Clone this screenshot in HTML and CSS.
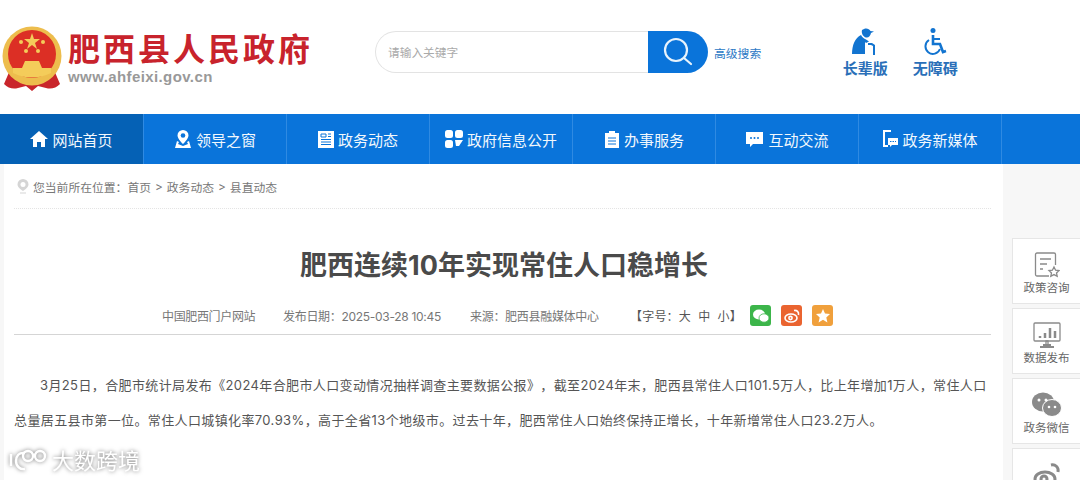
FILE: index.html
```html
<!DOCTYPE html>
<html lang="zh-CN">
<head>
    <meta charset="UTF-8">
    <title>肥西连续10年实现常住人口稳增长</title>
    <link rel="stylesheet" href="styles.css">
</head>
<body>
    <header class="top">
        <div class="logo">
            <svg class="emblem" width="60" height="66" viewBox="0 0 60 66">
                <path d="M8 44 L2 58 Q8 64 16 62 L24 60 L30 65 L36 60 L44 62 Q52 64 58 58 L52 44 Z" fill="#c9252b"/>
                <path d="M15 52 Q22 60 30 54 Q38 60 45 52" fill="none" stroke="#e9b544" stroke-width="2.500"/>
                <circle cx="30" cy="30" r="29.500" fill="#edbd4d"/>
                <circle cx="30" cy="28" r="24" fill="#dc2f25"/>
                <path d="M30 7l2 6h6l-5 4 2 6-5-4-5 4 2-6-5-4h6z" fill="#f4cc5a"/>
                <circle cx="19" cy="16" r="2" fill="#f4cc5a"/>
                <circle cx="41" cy="16" r="2" fill="#f4cc5a"/>
                <circle cx="24" cy="25" r="2" fill="#f4cc5a"/>
                <circle cx="36" cy="25" r="2" fill="#f4cc5a"/>
                <path d="M11 47 L11 42 L20 42 L23 35 L37 35 L40 42 L49 42 L49 47 Q30 56 11 47 Z" fill="#f4cc5a"/>
            </svg>
            <div class="logo-text">
                <div class="site-name">肥西县人民政府</div>
                <div class="site-url">www.ahfeixi.gov.cn</div>
            </div>
        </div>
        <div class="search">
            <div class="search-input">请输入关键字</div>
            <div class="search-btn">
                <svg width="30" height="30" viewBox="0 0 30 30" fill="none" stroke="#e8f3fc" stroke-width="2.200" stroke-linecap="round">
                    <circle cx="13" cy="13" r="11"/>
                    <path d="M21 21l7 6"/>
                </svg>
            </div>
        </div>
        <a class="adv-search">高级搜索</a>
        <div class="access">
            <div class="access-item">
                <svg width="28" height="28" viewBox="0 0 28 28" fill="#1274d0">
                    <path d="M11 3c3-2.500 7-2 8.500 1l3.500.5-3 1.500c-.5 3-2.500 5-5 4.500-2.500-.5-5-4-4-7.500z"/>
                    <path d="M10 8c1 2 3 4 5 4.500l3 2-3 1.500-1-1v12H1c0-9 3-16 9-19z"/>
                    <path d="M17 16h4l3 2v10h-2V19l-2-1h-3z"/>
                </svg>
                <span>长辈版</span>
            </div>
            <div class="access-item">
                <svg width="28" height="28" viewBox="0 0 28 28" fill="none" stroke="#1274d0" stroke-width="2">
                    <circle cx="12" cy="3.500" r="2.500" fill="#1274d0" stroke="none"/>
                    <path d="M12 8v9h7l3 8 3-1" stroke-width="2.600"/>
                    <path d="M12 12h7"/>
                    <path d="M8 13a7.500 7.500 0 1 0 11 9"/>
                </svg>
                <span>无障碍</span>
            </div>
        </div>
    </header>

    <nav class="nav">
        <a class="nav-item active">
            <svg width="18" height="18" viewBox="0 0 18 18" fill="#fff"><path d="M9 1L0 9h3v8h4v-5h4v5h4V9h3z"/></svg>
            网站首页
        </a>
        <a class="nav-item">
            <svg width="18" height="18" viewBox="0 0 18 18"><path d="M9 0a5.500 5.500 0 0 0-5.500 5.500C3.500 9 9 14 9 14s5.500-5 5.500-8.500A5.500 5.500 0 0 0 9 0z" fill="#fff"/><circle cx="9" cy="5.500" r="2.300" fill="#0a74da"/><path d="M3 11L1 18h16l-2-7-2 1 1 2-5 2-5-2 1-2z" fill="#fff"/></svg>
            领导之窗
        </a>
        <a class="nav-item">
            <svg width="16" height="18" viewBox="0 0 16 18"><path d="M0 1h16v17H0z" fill="#fff"/><path d="M3 4h5v3H3zM10 4h3M10 6.500h3M3 9.500h10M3 12h10M3 14.500h10" stroke="#0a74da" fill="none"/></svg>
            政务动态
        </a>
        <a class="nav-item">
            <svg width="18" height="18" viewBox="0 0 18 18" fill="#fff"><rect width="8" height="8" rx="2.500"/><rect x="10" width="8" height="8" rx="2.500"/><rect y="10" width="8" height="8" rx="2.500"/><path d="M10 10h8l-4 6h-3z"/></svg>
            政府信息公开
        </a>
        <a class="nav-item">
            <svg width="16" height="18" viewBox="0 0 16 18"><path d="M1 3h4V1h6v2h4v15H1z" fill="#fff"/><path d="M4 8h8M4 11h8M4 14h8" stroke="#0a74da"/></svg>
            办事服务
        </a>
        <a class="nav-item">
            <svg width="19" height="18" viewBox="0 0 19 18"><path d="M1 2h17v12H8l-3 3v-3H1z" fill="#fff"/><circle cx="6" cy="8" r="1" fill="#0a74da"/><circle cx="9.500" cy="8" r="1" fill="#0a74da"/><circle cx="13" cy="8" r="1" fill="#0a74da"/></svg>
            互动交流
        </a>
        <a class="nav-item">
            <svg width="16" height="18" viewBox="0 0 16 18"><path d="M9 1H2v15h4" fill="none" stroke="#fff" stroke-width="2"/><path d="M6 8h10v7H10l-2 2v-2H6z" fill="#fff"/><path d="M8 11.500h6" stroke="#0a74da" stroke-dasharray="1.500 1"/></svg>
            政务新媒体
        </a>
    </nav>

    <main class="content">
        <div class="crumb">
            <svg width="12" height="15" viewBox="0 0 12 15"><path d="M6 0a5.500 5.500 0 0 0-5.500 5.500C.5 9 6 12 6 12s5.500-3 5.500-6.500A5.500 5.500 0 0 0 6 0z" fill="#d5d5d5"/><circle cx="6" cy="5.500" r="2.500" fill="#fff"/><path d="M3 14h6" stroke="#d5d5d5"/></svg>
            <span class="crumb-here">您当前所在位置：</span>
            <span>首页</span>
            <span>&gt;</span>
            <span>政务动态</span>
            <span>&gt;</span>
            <span>县直动态</span>
        </div>
        <h1 class="title">肥西连续10年实现常住人口稳增长</h1>
        <div class="meta">
            <span class="meta-site">中国肥西门户网站</span>
            <span class="meta-date">发布日期：2025-03-28 10:45</span>
            <span class="meta-source">来源：肥西县融媒体中心</span>
            <span class="meta-size">【字号：大&nbsp;&nbsp;中&nbsp;&nbsp;小】</span>
            <div class="share">
                <div class="share-btn wechat">
                    <svg width="16" height="14" viewBox="0 0 16 14" fill="#fff"><ellipse cx="6" cy="5.500" rx="6" ry="5"/><ellipse cx="11" cy="9" rx="5" ry="4.200" stroke="#3cb54a" stroke-width=".8"/></svg>
                </div>
                <div class="share-btn weibo">
                    <svg width="16" height="14" viewBox="0 0 16 14" fill="none" stroke="#fff" stroke-width="1.600"><ellipse cx="7" cy="9" rx="6" ry="4"/><circle cx="6.500" cy="9" r="1.600"/><path d="M10 1.500c3-.5 5 1.500 4.500 4.500"/></svg>
                </div>
                <div class="share-btn star">
                    <svg width="14" height="14" viewBox="0 0 14 14" fill="#fff"><path d="M7 0l2 4.600 5 .5-3.700 3.300 1.100 5L7 10.800 2.600 13.400l1.100-5L0 5.100l5-.5z"/></svg>
                </div>
            </div>
        </div>
        <div class="article">
            <p>3月25日，合肥市统计局发布《2024年合肥市人口变动情况抽样调查主要数据公报》，截至2024年末，肥西县常住人口101.5万人，比上年增加1万人，常住人口总量居五县市第一位。常住人口城镇化率70.93%，高于全省13个地级市。过去十年，肥西常住人口始终保持正增长，十年新增常住人口23.2万人。</p>
        </div>
    </main>

    <aside class="side">
        <div class="side-item">
            <svg width="26" height="26" viewBox="0 0 26 26" fill="none" stroke="#8a8a8a" stroke-width="1.300"><path d="M15 24H3a1.500 1.500 0 0 1-1.500-1.500v-20A1.500 1.500 0 0 1 3 1h17a1.500 1.500 0 0 1 1.500 1.500V13"/><path d="M6 7h11M6 12h7M6 17h3"/><path d="M20 15l1.600 3.200 3.400.4-2.500 2.300.7 3.400-3.200-1.700-3.200 1.700.7-3.400-2.500-2.300 3.400-.4z"/></svg>
            <span>政策咨询</span>
        </div>
        <div class="side-item">
            <svg width="28" height="26" viewBox="0 0 28 26" fill="none" stroke="#8a8a8a" stroke-width="1.300"><rect x="1" y="1" width="26" height="18" rx="1"/><path d="M10 23h8M7 25h14" stroke-width="2"/><path d="M13 19h2v4h-2z"/><path d="M7 14v2M12 11v5M17 6v10M22 9v7" stroke-width="2.500"/></svg>
            <span>数据发布</span>
        </div>
        <div class="side-item">
            <svg width="30" height="26" viewBox="0 0 30 26" fill="#8a8a8a"><ellipse cx="11" cy="10" rx="11" ry="9.500"/><ellipse cx="20" cy="16" rx="9.500" ry="8.500" stroke="#fff"/><circle cx="7" cy="8" r="1.500" fill="#fff"/><circle cx="14" cy="8" r="1.500" fill="#fff"/><circle cx="17" cy="15" r="1.300" fill="#fff"/><circle cx="23" cy="15" r="1.300" fill="#fff"/></svg>
            <span>政务微信</span>
        </div>
        <div class="side-item">
            <svg width="28" height="26" viewBox="0 0 28 26" fill="none" stroke="#8a8a8a" stroke-width="3"><ellipse cx="12" cy="17" rx="10" ry="7"/><circle cx="11" cy="17" r="3"/><path d="M18 3c4-1 8 2 7 7"/></svg>
        </div>
    </aside>

    <div class="watermark">
        <svg width="42" height="26" viewBox="0 0 42 26" fill="none" stroke="#fff" stroke-width="2.400"><path d="M3 6v12"/><path d="M17 5c-6-1-9 3-9 8s4 9 9 8"/><circle cx="20" cy="8" r="5"/><circle cx="32" cy="8" r="5"/></svg>
        <span>大数跨境</span>
    </div>
</body>
</html>
```

FILE: styles.css
```css
* {
    box-sizing: border-box;
}
html, body {
    height: 480px;
    overflow: hidden;
}
body {
    margin: 0;
    position: relative;
    background: #f7f7f7;
    font-family: Inter, "Noto Sans CJK SC", "Liberation Sans", sans-serif;
    color: #666;
}
.top {
    display: flex;
    align-items: center;
    height: 114px;
    padding-left: 2px;
    background: #fff;
}
.logo {
    display: flex;
    align-items: center;
    width: 373px;
}
.emblem {
    flex: none;
    margin-top: 3px;
}
.logo-text {
    margin-left: 6px;
}
.site-name {
    margin-top: -1px;
    font-family: "Noto Sans CJK SC", sans-serif;
    font-size: 32px;
    font-weight: 700;
    line-height: 38px;
    letter-spacing: 3px;
    color: #c8232c;
    white-space: nowrap;
}
.site-url {
    margin-top: 2px;
    font-family: "Liberation Sans", sans-serif;
    font-size: 15px;
    font-weight: 700;
    line-height: 17px;
    letter-spacing: .4px;
    color: #999;
}
.search {
    display: flex;
    width: 333px;
    height: 42px;
    margin-bottom: 10px;
}
.search-input {
    flex: 1;
    padding-left: 12px;
    border: 1px solid #e3e3e3;
    border-right: none;
    border-radius: 21px 0 0 21px;
    font-size: 11.700px;
    line-height: 42px;
    color: #aaa;
}
.search-btn {
    display: flex;
    align-items: center;
    justify-content: center;
    width: 60px;
    border-radius: 0 21px 21px 0;
    background: #0a74da;
}
.adv-search {
    margin: 0 0 10px 6px;
    font-size: 11.800px;
    color: #2b78c5;
}
.access {
    display: flex;
    gap: 24px;
    margin: 0 0 9px 81px;
}
.access-item {
    display: flex;
    flex-direction: column;
    align-items: center;
    gap: 4px;
    width: 46px;
    font-size: 15px;
    font-weight: 700;
    line-height: 20px;
    color: #2a6fb8;
}
.nav {
    display: flex;
    height: 50px;
    background: #0a74da;
}
.nav-item {
    display: flex;
    align-items: center;
    justify-content: center;
    gap: 4px;
    width: 143px;
    border-right: 1px solid #2f8ae2;
    font-size: 15px;
    color: #f2f8fd;
    white-space: nowrap;
}
.nav-item.active {
    width: 144px;
    background: #0561b5;
}
.content {
    width: 999px;
    height: 316px;
    margin-left: 4px;
    padding: 0 12px 0 10px;
    background: #fff;
}
.crumb {
    display: flex;
    align-items: center;
    gap: 4px;
    height: 45px;
    padding: 1px 0 0 3px;
    border-bottom: 1px dotted #e4e4e4;
    font-size: 11.800px;
    color: #777;
}
.crumb-here {
    margin-right: -4px;
}
.title {
    margin: 37px 0 0;
    padding-left: 3px;
    font-size: 27px;
    font-weight: 700;
    line-height: 40px;
    text-align: center;
    color: #4a4a4a;
}
.meta {
    display: flex;
    align-items: center;
    height: 40px;
    padding: 2px 0 0 148px;
    margin-top: 9px;
    border-bottom: 1px solid #d5d5d5;
    font-size: 12px;
    color: #777;
}
.meta-site {
    width: 121px;
    letter-spacing: -.35px;
}
.meta-date {
    width: 187px;
    letter-spacing: -.3px;
}
.meta-source {
    width: 160px;
    letter-spacing: -.3px;
}
.meta-size {
    width: 120px;
    color: #555;
    letter-spacing: .2px;
}
.share {
    display: flex;
    gap: 10px;
}
.share-btn {
    display: flex;
    align-items: center;
    justify-content: center;
    width: 21px;
    height: 21px;
    border-radius: 3px;
}
.wechat {
    background: #3cb54a;
}
.weibo {
    background: #ea6430;
}
.star {
    background: #f0a03c;
}
.article p {
    margin: 33px 0 0;
    text-indent: 26px;
    text-spacing-trim: space-all;
    font-size: 13px;
    line-height: 35px;
    letter-spacing: .38px;
    color: #555;
}
.side {
    position: absolute;
    top: 238px;
    left: 1012px;
    display: flex;
    flex-direction: column;
    gap: 4px;
    width: 68px;
    height: 242px;
    overflow: hidden;
}
.side-item {
    display: flex;
    flex-direction: column;
    align-items: center;
    gap: 2px;
    flex: none;
    height: 66px;
    padding-top: 13px;
    border: 1px solid #e6e6e6;
    border-right: none;
    background: #fff;
    font-size: 11.500px;
    line-height: 16px;
    color: #666;
}
.watermark {
    position: absolute;
    left: 8px;
    top: 446px;
    display: flex;
    align-items: center;
    gap: 2px;
    font-size: 22px;
    line-height: 30px;
    color: #fff;
    filter: drop-shadow(0 0 2px #777);
}
```
